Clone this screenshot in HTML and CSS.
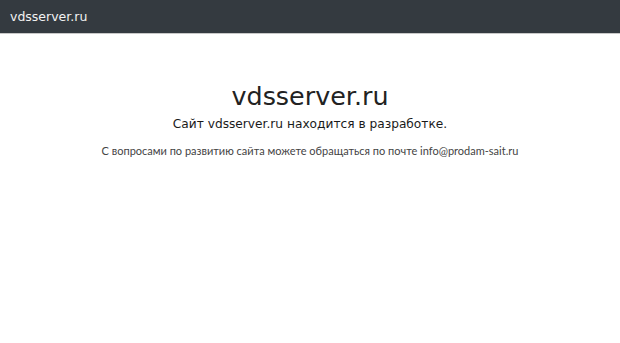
FILE: index.html
```html
<!DOCTYPE html>
<html lang="ru">
<head>
  <meta charset="UTF-8" />
  <title>vdsserver.ru</title>
  <link rel="stylesheet" href="styles.css">
</head>
<body>
  <div class="topbar">
    <span class="brand">vdsserver.ru</span>
  </div>

  <div class="content">
    <h1>vdsserver.ru</h1>
    <p class="lead">Сайт vdsserver.ru находится в разработке.</p>
    <p class="note">С вопросами по развитию сайта можете обращаться по почте info@prodam-sait.ru</p>
  </div>
</body>
</html>
```

FILE: styles.css
```css
* { box-sizing: border-box; }

body {
  margin: 0;
  font-family: "DejaVu Sans", sans-serif;
  background: #ffffff;
  color: #212529;
}

.topbar {
  height: 34px;
  background: #343a40;
  border-bottom: 1px solid #c8c8c8;
  display: flex;
  align-items: center;
  padding: 0 10px;
}

.brand {
  color: #f2f2f2;
  font-size: 12.5px;
}

.content {
  text-align: center;
  padding-top: 48px;
}

h1 {
  margin: 0;
  font-size: 25.4px;
  line-height: 28px;
  font-weight: normal;
  color: #222;
}

.lead {
  margin: 6px 0 0;
  font-size: 12.2px;
  line-height: 16px;
  color: #1a1a1a;
}

.note {
  margin: 12px 0 0;
  font-family: "Lato", sans-serif;
  font-size: 11px;
  line-height: 14px;
  color: #444;
}
```
